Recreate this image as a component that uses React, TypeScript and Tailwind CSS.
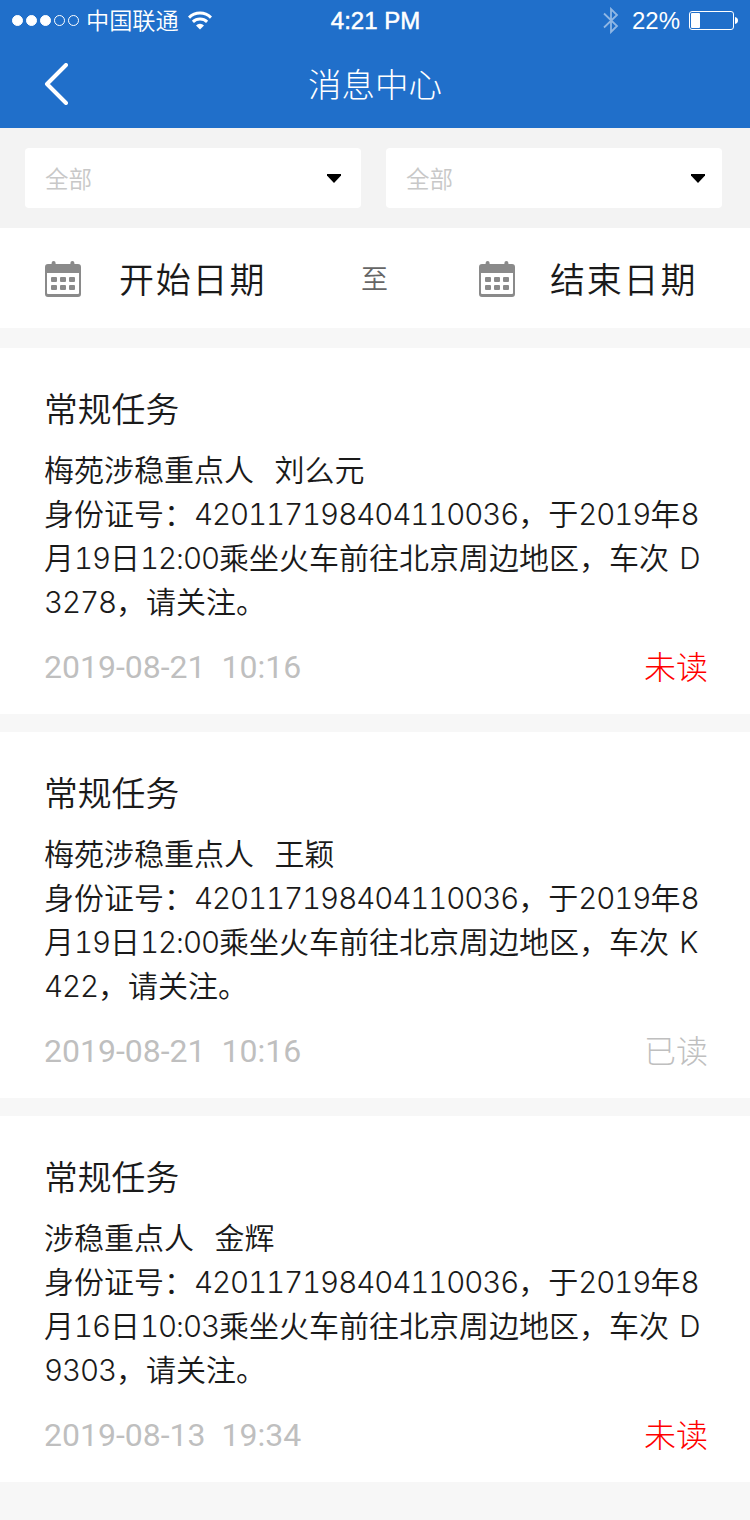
import { Fragment } from 'react';

type Message = {
    id: number;
    title: string;
    lines: string[];
    time: string;
    read: boolean;
};

const MESSAGES: Message[] = [
    {
        id: 1,
        title: '常规任务',
        lines: [
            '梅苑涉稳重点人  刘么元',
            '身份证号：420117198404110036，于2019年8',
            '月19日12:00乘坐火车前往北京周边地区，车次 D',
            '3278，请关注。',
        ],
        time: '2019-08-21  10:16',
        read: false,
    },
    {
        id: 2,
        title: '常规任务',
        lines: [
            '梅苑涉稳重点人  王颖',
            '身份证号：420117198404110036，于2019年8',
            '月19日12:00乘坐火车前往北京周边地区，车次 K',
            '422，请关注。',
        ],
        time: '2019-08-21  10:16',
        read: true,
    },
    {
        id: 3,
        title: '常规任务',
        lines: [
            '涉稳重点人  金辉',
            '身份证号：420117198404110036，于2019年8',
            '月16日10:03乘坐火车前往北京周边地区，车次 D',
            '9303，请关注。',
        ],
        time: '2019-08-13  19:34',
        read: false,
    },
];

function WifiIcon() {
    return (
        <svg className="ml-[9px] h-[19px] w-6" viewBox="0 0 24 19" fill="none" stroke="#fff" strokeWidth="3">
            <path d="M1 6.6a15.6 15.6 0 0 1 22 0" />
            <path d="M4.9 10.8a10.2 10.2 0 0 1 14.2 0" />
            <path d="M12 18.6l-4-4.2a5.8 5.8 0 0 1 8 0z" fill="#fff" stroke="none" />
        </svg>
    );
}

function CalendarIcon() {
    return (
        <svg className="mt-0.5 h-9 w-9 shrink-0" viewBox="0 0 36 36" fill="#8a8a8a">
            <rect x="6.6" y="0" width="4" height="7" rx="2" />
            <rect x="25.4" y="0" width="4" height="7" rx="2" />
            <path
                fillRule="evenodd"
                d="M3 3h30a3 3 0 0 1 3 3v27a3 3 0 0 1-3 3H3a3 3 0 0 1-3-3V6a3 3 0 0 1 3-3zM2 12v20a1 1 0 0 0 1 1h30a1 1 0 0 0 1-1V12z"
            />
            {[16, 24].map((y) =>
                [6, 15, 24].map((x) => <rect key={`${x}-${y}`} x={x} y={y} width="6" height="5" rx="1" />),
            )}
        </svg>
    );
}

function StatusBar() {
    return (
        <div className="flex h-10 items-center justify-between text-white">
            <div className="flex w-[300px] items-center pl-3">
                <div className="flex gap-[3px]">
                    {[1, 2, 3, 4, 5].map((n) => (
                        <span
                            key={n}
                            className={`h-[11px] w-[11px] rounded-full border border-white ${n <= 3 ? 'bg-white' : ''}`}
                        />
                    ))}
                </div>
                <span className="-mt-0.5 ml-[7px] text-[23.2px] leading-10 font-[350]">中国联通</span>
                <WifiIcon />
            </div>
            <span className="mt-0.5 pl-px font-['Liberation_Sans',sans-serif] text-2xl leading-10 [-webkit-text-stroke:0.5px_white]">
                4:21 PM
            </span>
            <div className="flex w-[300px] items-center justify-end pr-[11px]">
                <svg
                    className="h-[27px] w-4 opacity-50"
                    viewBox="0 0 16 27"
                    fill="none"
                    stroke="#fff"
                    strokeWidth="1.8"
                >
                    <path d="M1 6.5l13 12.5-6 6V2l6 6L1 20.5" />
                </svg>
                <span className="mt-0.5 ml-[13px] font-['Liberation_Sans',sans-serif] text-2xl leading-10">22%</span>
                <svg className="ml-[9px] h-[19px] w-[50px]" viewBox="0 0 50 19">
                    <rect x="0.5" y="0.5" width="44" height="18" rx="2.5" fill="none" stroke="#fff" />
                    <rect x="2" y="2" width="9" height="15" rx="1" fill="#fff" />
                    <path d="M46 6c2 .3 3 1.600 3 3.500s-1 3.200-3 3.500z" fill="#fff" />
                </svg>
            </div>
        </div>
    );
}

function NavBar() {
    return (
        <div className="flex h-22 items-center text-white">
            <svg
                className="ml-11 h-[42px] w-6"
                viewBox="0 0 24 42"
                fill="none"
                stroke="#fff"
                strokeWidth="4"
                strokeLinecap="round"
                strokeLinejoin="round"
            >
                <path d="M22 2L3 21l19 19" />
            </svg>
            <h1 className="-mt-[3px] flex-1 pr-17 text-center text-[33.5px] leading-[85px] font-light">消息中心</h1>
        </div>
    );
}

function FilterSelect({ arrowClass }: { arrowClass: string }) {
    return (
        <button
            type="button"
            className="flex h-15 w-[336px] items-center justify-between rounded bg-white pl-5 text-left"
        >
            <span className="pt-px text-[23.5px] font-[350] text-[#c8c8c8]">全部</span>
            <svg className={`h-[9px] w-[14px] ${arrowClass}`} viewBox="0 0 14 9">
                <path d="M0 0h14v1.500L7 9 0 1.500z" fill="#000" />
            </svg>
        </button>
    );
}

// Digits and latin letters use their own face, one size across with the han text
function MixedText({ text }: { text: string }) {
    return text.split(/([0-9:A-Z]+)/).map((part, i) =>
        i % 2 === 1 ? (
            <span
                key={i}
                className="font-['Inter',sans-serif] text-[29.5px] leading-none font-light tracking-[-1.07px] tabular-nums"
            >
                {part}
            </span>
        ) : (
            <Fragment key={i}>{part}</Fragment>
        ),
    );
}

function MessageCard({ message }: { message: Message }) {
    return (
        <article className="h-[366px] bg-white px-11 pt-9">
            <h2 className="text-[33.8px] leading-12 font-[350] text-[#1a1a1a]">{message.title}</h2>
            <div className="mt-3.5 text-[30px] leading-11 font-[350] whitespace-pre text-[#1a1a1a] [word-spacing:3.5px]">
                {message.lines.map((line) => (
                    <p key={line} className="h-11">
                        <MixedText text={line} />
                    </p>
                ))}
            </div>
            <div className="mt-[21px] flex h-12 items-center justify-between leading-12">
                <time className="font-['Roboto',sans-serif] text-[32px] whitespace-pre text-[#bfbfbf]">
                    {message.time}
                </time>
                {message.read ? (
                    <span className="-mt-1 -mr-0.5 text-[32px] font-light text-[#bfbfbf]">已读</span>
                ) : (
                    <span className="-mt-1 -mr-0.5 text-[32px] font-light text-[#ff0000]">未读</span>
                )}
            </div>
        </article>
    );
}

export default function App() {
    return (
        <div className="h-[1520px] w-[750px] overflow-hidden bg-[#f7f7f7] font-['Noto_Sans_CJK_SC',sans-serif]">
            <header className="h-32 bg-[#206fca]">
                <StatusBar />
                <NavBar />
            </header>

            <div className="flex h-25 gap-[25px] bg-[#f3f3f3] pt-5 pl-[25px]">
                <FilterSelect arrowClass="mr-5" />
                <FilterSelect arrowClass="mr-[17px]" />
            </div>

            <div className="flex h-25 items-center bg-white pl-[45px] text-[#1a1a1a]">
                <CalendarIcon />
                <span className="ml-[38px] w-[242px] text-[35px] font-[350] tracking-[1.8px]">开始日期</span>
                <span className="w-[118px] pt-px text-[27px] font-[350] text-[#666]">至</span>
                <CalendarIcon />
                <span className="ml-[35px] text-[35px] font-[350] tracking-[1.8px]">结束日期</span>
            </div>

            <main className="mt-5 flex flex-col gap-[18px]">
                {MESSAGES.map((message) => (
                    <MessageCard key={message.id} message={message} />
                ))}
            </main>
        </div>
    );
}
